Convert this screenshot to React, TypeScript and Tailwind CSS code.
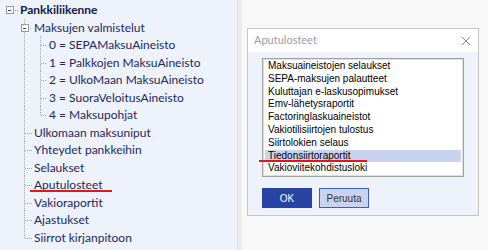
type Row = {
  level: 0 | 1 | 2;
  text: string;
  bold?: boolean;
  expander?: boolean;
  last?: boolean;
  mark?: boolean;
};

const rows: Row[] = [
  { level: 0, text: "Pankkiliikenne", bold: true, expander: true },
  { level: 1, text: "Maksujen valmistelut", expander: true },
  { level: 2, text: "0 = SEPAMaksuAineisto" },
  { level: 2, text: "1 = Palkkojen MaksuAineisto" },
  { level: 2, text: "2 = UlkoMaan MaksuAineisto" },
  { level: 2, text: "3 = SuoraVeloitusAineisto" },
  { level: 2, text: "4 = Maksupohjat", last: true },
  { level: 1, text: "Ulkomaan maksuniput" },
  { level: 1, text: "Yhteydet pankkeihin" },
  { level: 1, text: "Selaukset" },
  { level: 1, text: "Aputulosteet", mark: true },
  { level: 1, text: "Vakioraportit" },
  { level: 1, text: "Ajastukset" },
  { level: 1, text: "Siirrot kirjanpitoon", last: true },
];

const listItems = [
  "Maksuaineistojen selaukset",
  "SEPA-maksujen palautteet",
  "Kuluttajan e-laskusopimukset",
  "Emv-lähetysraportit",
  "Factoringlaskuaineistot",
  "Vakiotilisiirtojen tulostus",
  "Siirtolokien selaus",
  "Tiedonsiirtoraportit",
  "Vakioviitekohdistusloki",
];

const H = 17.5;
const mid = 9;
const dot = { stroke: "#a3a3a3", strokeWidth: 1, strokeDasharray: "1 1" };

function Box({ cx }: { cx: number }) {
  return (
    <g>
      <rect x={cx - 3.5} y={mid - 3.5} width={7} height={7} fill="#fff" stroke="#9a9a9a" strokeWidth={1} />
      <line x1={cx - 1.5} y1={mid} x2={cx + 1.5} y2={mid} stroke="#444" strokeWidth={1} />
    </g>
  );
}

function Gutter({ row }: { row: Row }) {
  const w = row.level === 0 ? 20 : row.level === 1 ? 34 : 49;
  return (
    <svg width={w} height={H} className="shrink-0" shapeRendering="crispEdges">
      {row.level === 0 && (
        <>
          <line x1={13} y1={mid + 0.5} x2={18} y2={mid + 0.5} {...dot} />
          <Box cx={9.5} />
        </>
      )}
      {row.level === 1 && (
        <>
          {row.expander ? (
            <>
              <line x1={24.5} y1={0} x2={24.5} y2={mid - 3} {...dot} />
              <line x1={24.5} y1={mid + 4} x2={24.5} y2={H} {...dot} />
              <line x1={28} y1={mid + 0.5} x2={32} y2={mid + 0.5} {...dot} />
              <line x1={40.5} y1={mid + 4} x2={40.5} y2={H} {...dot} />
              <Box cx={24.5} />
            </>
          ) : (
            <>
              <line x1={24.5} y1={0} x2={24.5} y2={row.last ? mid : H} {...dot} />
              <line x1={25} y1={mid + 0.5} x2={32} y2={mid + 0.5} {...dot} />
            </>
          )}
        </>
      )}
      {row.level === 2 && (
        <>
          <line x1={24.5} y1={0} x2={24.5} y2={H} {...dot} />
          <line x1={40.5} y1={0} x2={40.5} y2={row.last ? mid : H} {...dot} />
          <line x1={41} y1={mid + 0.5} x2={47} y2={mid + 0.5} {...dot} />
        </>
      )}
    </svg>
  );
}

function Tree() {
  return (
    <div className="w-[237px] shrink-0 bg-[#eef2fb] pt-[1px] font-['Lato',sans-serif] text-[12px] text-[#1c2a58]">
      {rows.map((row) => (
        <div key={row.text} className="relative flex h-[17.5px] items-start">
          <Gutter row={row} />
          <span className={`leading-[17.5px] whitespace-nowrap ${row.bold ? "font-bold text-[#101a44]" : ""}`}>
            {row.text}
          </span>
          {row.mark && <div className="absolute left-[30px] top-[13.5px] h-[2px] w-[82px] bg-[#e3151b]" />}
        </div>
      ))}
    </div>
  );
}

function Dialog() {
  return (
    <div className="flex h-[188px] w-[232px] flex-col border border-[#c6c6c6] bg-[#eef2fb] font-['Liberation_Sans',Arial,sans-serif]">
      <div className="flex h-[23px] items-center justify-between bg-white pl-[6px] pr-[7px]">
        <span className="font-['Lato',sans-serif] text-[11px] text-[#9c9ca8]">Aputulosteet</span>
        <svg width="10" height="10" viewBox="0 0 10 10">
          <path d="M1 1 L9 9 M9 1 L1 9" stroke="#8a8a8a" strokeWidth="1" />
        </svg>
      </div>
      <div className="flex flex-1 flex-col px-[14px] pt-[6px]">
        <div className="h-[119px] border border-[#a2a2a2] bg-white">
          <div className="h-full border border-[#dedede] px-[1px]">
            {listItems.map((item, i) => (
              <div
                key={item}
                className={`relative h-[12.8px] pl-[3px] text-[10px] leading-[12.8px] whitespace-nowrap text-black ${
                  i === 7 ? "bg-[#c8d4ef]" : ""
                }`}
              >
                {item}
                {i === 7 && <div className="absolute left-[-6px] top-[10px] h-[2px] w-[108px] bg-[#e3151b]" />}
              </div>
            ))}
          </div>
        </div>
        <div className="mt-[11px] flex gap-[7px]">
          <button className="h-[20px] w-[50px] bg-[#2a44a6] text-[10px] text-white">OK</button>
          <button className="h-[20px] w-[50px] border border-[#3f5cb8] bg-[#c8d4ef] text-[10px] text-[#333]">
            Peruuta
          </button>
        </div>
      </div>
    </div>
  );
}

export default function App() {
  return (
    <div className="flex h-[250px] w-[488px] overflow-hidden bg-[#f8f8f8]">
      <Tree />
      <div className="w-[5px] shrink-0 border-l border-[#dcdfe6] bg-[#ececee]" />
      <div className="pl-[5px] pt-[28px]">
        <Dialog />
      </div>
    </div>
  );
}
